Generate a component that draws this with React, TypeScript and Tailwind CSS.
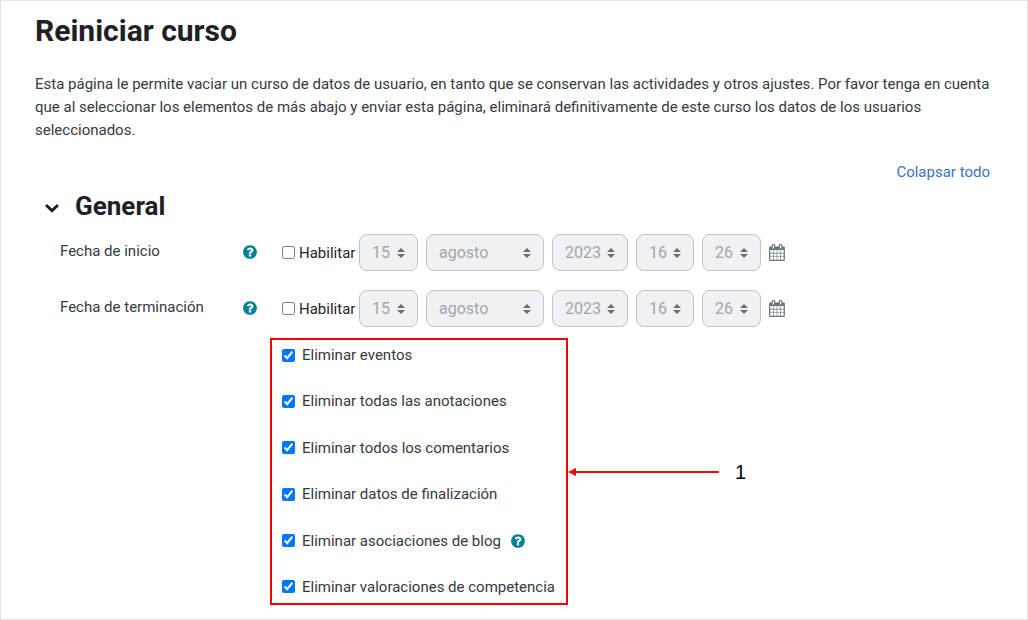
import React from "react";

const HELP_PATH =
  "M1024 1376v-192q0-14-9-23t-23-9h-192q-14 0-23 9t-9 23v192q0 14 9 23t23 9h192q14 0 23-9t9-23zm256-672q0-88-55.5-163t-138.5-116-170-41q-243 0-371 213-15 24 8 42l132 100q7 6 19 6 16 0 25-12 53-68 86-92 34-24 86-24 48 0 85.5 26t37.5 59q0 38-20 61t-68 45q-63 28-115.5 86.5t-52.5 125.5v36q0 14 9 23t23 9h192q14 0 23-9t9-23q0-19 21.5-49.5t54.5-49.5q32-18 49-28.5t46-35 44.5-48 28-60.5 12.5-81zm384 192q0 209-103 385.5t-279.5 279.5-385.5 103-385.5-103-279.5-279.5-103-385.5 103-385.5 279.5-279.5 385.5-103 385.5 103 279.5 279.5 103 385.5z";

const CALENDAR_PATH =
  "M192 1664h288v-288h-288v288zm352 0h320v-288h-320v288zm-352-352h288v-320h-288v320zm352 0h320v-320h-320v320zm-352-384h288v-288h-288v288zm736 736h320v-288h-320v288zm-384-736h320v-288h-320v288zm768 736h288v-288h-288v288zm-384-352h320v-320h-320v320zm-352-864v-288q0-13-9.5-22.5t-22.5-9.5h-64q-13 0-22.5 9.5t-9.5 22.5v288q0 13 9.5 22.5t22.5 9.5h64q13 0 22.5-9.5t9.5-22.5zm736 864h288v-320h-288v320zm-384-384h320v-288h-320v288zm384 0h288v-288h-288v288zm32-480v-288q0-13-9.5-22.5t-22.5-9.5h-64q-13 0-22.5 9.5t-9.5 22.5v288q0 13 9.5 22.5t22.5 9.5h64q13 0 22.5-9.5t9.5-22.5zm384-64v1280q0 52-38 90t-90 38h-1408q-52 0-90-38t-38-90v-1280q0-52 38-90t90-38h128v-96q0-66 47-113t113-47h64q66 0 113 47t47 113v96h384v-96q0-66 47-113t113-47h64q66 0 113 47t47 113v96h128q52 0 90 38t38 90z";

function HelpButton({ topic }: { topic: string }) {
  return (
    <button type="button" aria-label={`Ayuda sobre ${topic}`} className="shrink-0 text-[#008196]">
      <svg viewBox="0 0 1792 1792" className="block size-4" fill="currentColor" aria-hidden="true">
        <path d={HELP_PATH} />
      </svg>
    </button>
  );
}

function DateSelect({ label, value, width }: { label: string; value: string; width: string }) {
  return (
    <span className={`relative block shrink-0 ${width}`}>
      <select
        disabled
        aria-label={label}
        defaultValue={value}
        className="block h-[37px] w-full appearance-none rounded-lg border border-[#bfc3c9] bg-[#f0f1f4] pl-3 text-[16px] text-[#a2a6aa] opacity-100"
      >
        <option>{value}</option>
      </select>
      <svg
        viewBox="0 0 4 5"
        className="pointer-events-none absolute top-[14px] right-[13px] h-[10px] w-2"
        fill="#6a6e72"
        aria-hidden="true"
      >
        <path d="M2 0L0 2h4zm0 5L0 3h4z" />
      </svg>
    </span>
  );
}

function DateRow({ id, title }: { id: string; title: string }) {
  return (
    <div className="flex items-start">
      <div className="flex w-[222px] shrink-0 items-center justify-between pt-[6px] pr-6">
        <span className="leading-[23px]">{title}</span>
        <HelpButton topic={title} />
      </div>
      <div className="flex items-center">
        <input id={id} type="checkbox" className="m-0 size-[13px] shrink-0" />
        <label htmlFor={id} className="w-16 shrink-0 pl-1 text-[#212529]">
          Habilitar
        </label>
        <div className="flex items-center gap-2">
          <DateSelect label={`${title}: día`} value="15" width="w-[59px]" />
          <DateSelect label={`${title}: mes`} value="agosto" width="w-[118px]" />
          <DateSelect label={`${title}: año`} value="2023" width="w-[76px]" />
          <DateSelect label={`${title}: hora`} value="16" width="w-[58px]" />
          <DateSelect label={`${title}: minuto`} value="26" width="w-[59px]" />
          <button type="button" disabled aria-label={`${title}: calendario`} className="text-[#6a737b]">
            <svg viewBox="64 0 1664 1792" className="block h-[17px] w-4" fill="currentColor" aria-hidden="true">
              <path d={CALENDAR_PATH} />
            </svg>
          </button>
        </div>
      </div>
    </div>
  );
}

const options = [
  { id: "eventos", label: "Eliminar eventos" },
  { id: "anotaciones", label: "Eliminar todas las anotaciones" },
  { id: "comentarios", label: "Eliminar todos los comentarios" },
  { id: "finalizacion", label: "Eliminar datos de finalización" },
  { id: "blog", label: "Eliminar asociaciones de blog", help: true },
  { id: "competencia", label: "Eliminar valoraciones de competencia" },
];

export default function App() {
  return (
    <main className="min-h-screen border border-[#e4e4e4] bg-white px-[34px] pt-3 pb-[14px] font-['Roboto',sans-serif] text-[15px] leading-[22px] text-[#343a40]">
      <h1 className="text-[30px] leading-9 font-bold text-[#1d2125]">Reiniciar curso</h1>
      <p className="mt-6 leading-[23px]">
        Esta página le permite vaciar un curso de datos de usuario, en tanto que se conservan las actividades y otros
        ajustes. Por favor tenga en cuenta que al seleccionar los elementos de más abajo y enviar esta página, eliminará
        definitivamente de este curso los datos de los usuarios seleccionados.
      </p>
      <div className="mt-[19px] flex justify-end pr-[3px]">
        <a href="#general" className="text-[#3b73bd]">
          Colapsar todo
        </a>
      </div>

      <section id="general">
        <div className="mt-[7px] flex items-center pl-[9px]">
          <button type="button" aria-label="Colapsar General" className="mt-1 mr-[15px] text-[#1d2125]">
            <svg viewBox="0 0 16 10" className="block h-[10px] w-4" fill="none" stroke="currentColor" strokeWidth="3" aria-hidden="true">
              <path d="M2 2 8 7.6 14 2" />
            </svg>
          </button>
          <h2 className="text-[26px] leading-8 font-bold text-[#1d2125]">General</h2>
        </div>

        <div className="mt-3 flex flex-col gap-[19px] pl-[25px]">
          <DateRow id="inicio" title="Fecha de inicio" />
          <DateRow id="fin" title="Fecha de terminación" />
        </div>

        <div className="mt-[11px] flex items-center pl-[235px]">
          <div className="flex min-h-[267px] w-[298px] flex-col justify-between border-2 border-[#ff0000] px-[10px] pt-1 pb-[5px]">
            {options.map((o) => (
              <div key={o.id} className="flex items-center">
                <input
                  id={o.id}
                  type="checkbox"
                  defaultChecked
                  className="m-0 size-[13px] shrink-0 accent-[#0075ff]"
                />
                <label htmlFor={o.id} className="pl-[7px] whitespace-nowrap">
                  {o.label}
                </label>
                {o.help && (
                  <span className="flex pl-[9px]">
                    <HelpButton topic={o.label} />
                  </span>
                )}
              </div>
            ))}
          </div>
          <svg viewBox="0 0 151 8" className="h-2 w-[151px] shrink-0" fill="#ff0000" aria-hidden="true">
            <path d="M0 4 8 0v8z" />
            <path d="M7 3h144v2H7z" />
          </svg>
          <span className="pl-4 font-['Liberation_Sans',sans-serif] text-[20px] text-black">1</span>
        </div>
      </section>
    </main>
  );
}
